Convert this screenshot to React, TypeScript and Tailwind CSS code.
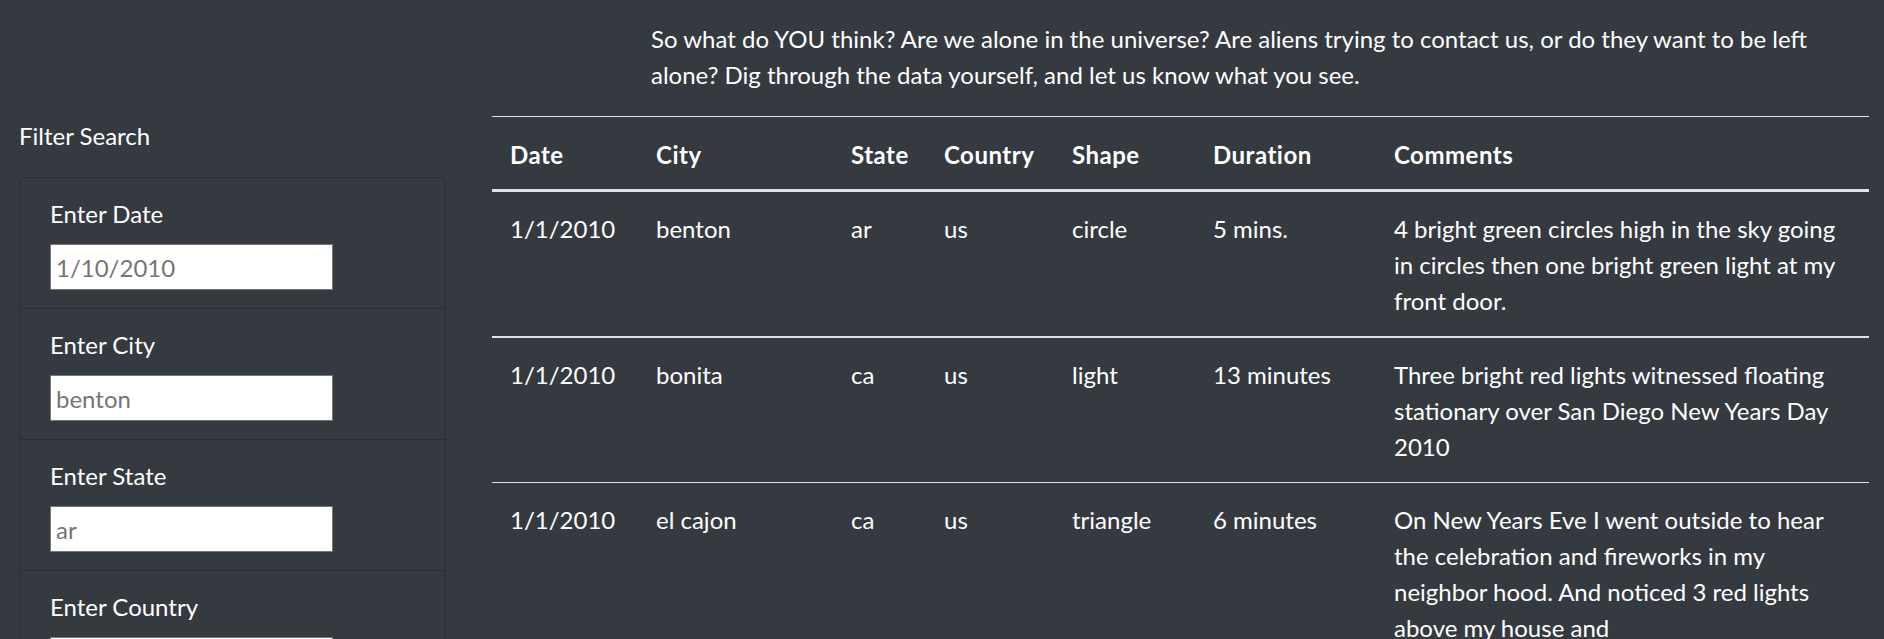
import React from "react";

const rows = [
  {
    date: "1/1/2010",
    city: "benton",
    state: "ar",
    country: "us",
    shape: "circle",
    duration: "5 mins.",
    comments: [
      "4 bright green circles high in the sky going",
      "in circles then one bright green light at my",
      "front door.",
    ],
  },
  {
    date: "1/1/2010",
    city: "bonita",
    state: "ca",
    country: "us",
    shape: "light",
    duration: "13 minutes",
    comments: [
      "Three bright red lights witnessed floating",
      "stationary over San Diego New Years Day",
      "2010",
    ],
  },
  {
    date: "1/1/2010",
    city: "el cajon",
    state: "ca",
    country: "us",
    shape: "triangle",
    duration: "6 minutes",
    comments: [
      "On New Years Eve I went outside to hear",
      "the celebration and fireworks in my",
      "neighbor hood. And noticed 3 red lights",
      "above my house and",
    ],
  },
];

const filters = [
  { label: "Enter Date", placeholder: "1/10/2010" },
  { label: "Enter City", placeholder: "benton" },
  { label: "Enter State", placeholder: "ar" },
  { label: "Enter Country", placeholder: "us" },
  { label: "Enter Shape", placeholder: "circle" },
];

export default function App() {
  return (
    <div
      className="flex h-[639px] w-full overflow-hidden bg-[#343a40] text-[24px] leading-[36px] text-white"
      style={{ fontFamily: "Lato, 'Open Sans', sans-serif" }}
    >
      <aside className="w-[446px] flex-none pl-[19px] pt-[118px]">
        <div className="mb-[23px]">Filter Search</div>
        <ul className="rounded-[6px] border border-[#2a2f34]">
          {filters.map((f, i) => (
            <li
              key={f.label}
              className={`px-[30px] pt-[18px] pb-[18px] ${i > 0 ? "border-t border-[#2a2f34]" : ""}`}
            >
              <label className="mb-[12px] block">{f.label}</label>
              <input
                type="text"
                placeholder={f.placeholder}
                className="block h-[46px] w-[283px] border border-[#767676] bg-white px-[5px] text-[24px] text-black placeholder:text-[#757575]"
              />
            </li>
          ))}
        </ul>
      </aside>
      <main className="min-w-0 flex-1 pl-[46px] pr-[15px]">
        <p className="mb-[23px] ml-[159px] pt-[21px]">
          So what do YOU think? Are we alone in the universe? Are aliens trying to contact us, or do they want to be left
          <br />
          alone? Dig through the data yourself, and let us know what you see.
        </p>
        <table className="w-full table-fixed border-collapse text-left">
          <colgroup>
            <col className="w-[146px]" />
            <col className="w-[195px]" />
            <col className="w-[93px]" />
            <col className="w-[128px]" />
            <col className="w-[141px]" />
            <col className="w-[181px]" />
            <col />
          </colgroup>
          <thead>
            <tr className="border-t border-b-[3px] border-t-[#dee2e6] border-b-[#dee2e6]">
              {["Date", "City", "State", "Country", "Shape", "Duration", "Comments"].map((h) => (
                <th key={h} className="px-[18px] pt-[20px] pb-[16px] align-top font-bold tracking-[0.5px]">
                  {h}
                </th>
              ))}
            </tr>
          </thead>
          <tbody>
            {rows.map((r, i) => (
              <tr
                key={i}
                className={`${i === 0 ? "border-b-2" : "border-b"} border-[#dee2e6]`}
              >
                <td className="px-[18px] pt-[19px] pb-[17px] align-top">{r.date}</td>
                <td className="px-[18px] pt-[19px] pb-[17px] align-top">{r.city}</td>
                <td className="px-[18px] pt-[19px] pb-[17px] align-top">{r.state}</td>
                <td className="px-[18px] pt-[19px] pb-[17px] align-top">{r.country}</td>
                <td className="px-[18px] pt-[19px] pb-[17px] align-top">{r.shape}</td>
                <td className="px-[18px] pt-[19px] pb-[17px] align-top">{r.duration}</td>
                <td className="px-[18px] pt-[19px] pb-[17px] align-top">
                  {r.comments.map((c, j) => (
                    <React.Fragment key={j}>
                      {c}
                      {j < r.comments.length - 1 && <br />}
                    </React.Fragment>
                  ))}
                </td>
              </tr>
            ))}
          </tbody>
        </table>
      </main>
    </div>
  );
}
